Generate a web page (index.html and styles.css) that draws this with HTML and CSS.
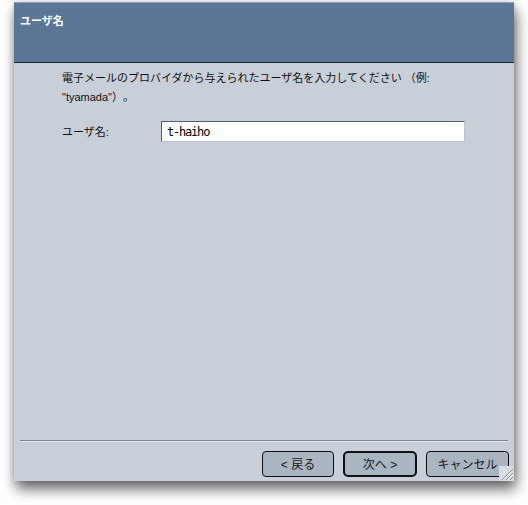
FILE: index.html
```html
<!DOCTYPE html>
<html lang="ja">
<head>
<meta charset="utf-8">
<title>ユーザ名</title>
<link rel="stylesheet" href="styles.css">
</head>
<body>
<div class="window">
  <div class="header">
    <div class="title">ユーザ名</div>
  </div>
  <div class="content">
    <p class="desc">電子メールのプロバイダから与えられたユーザ名を入力してください （例:<br>"tyamada"）。</p>
    <div class="field">
      <label class="label" for="user">ユーザ名:</label>
      <input class="input" id="user" type="text" value="t-haiho">
    </div>
  </div>
  <div class="separator"></div>
  <div class="footer">
    <button class="btn btn-back">&lt; 戻る</button>
    <button class="btn btn-next">次へ &gt;</button>
    <button class="btn btn-cancel">キャンセル</button>
  </div>
  <div class="grip">
    <svg width="15" height="15" viewBox="0 0 15 15">
      <line x1="3" y1="14" x2="14" y2="3" stroke="#8a8f96" stroke-width="1"/>
      <line x1="7" y1="14" x2="14" y2="7" stroke="#8a8f96" stroke-width="1"/>
      <line x1="11" y1="14" x2="14" y2="11" stroke="#8a8f96" stroke-width="1"/>
      <line x1="4" y1="14" x2="14" y2="4" stroke="#ffffff" stroke-width="1"/>
      <line x1="8" y1="14" x2="14" y2="8" stroke="#ffffff" stroke-width="1"/>
    </svg>
  </div>
</div>
</body>
</html>
```
FILE: styles.css
```css
html, body {
  margin: 0;
  padding: 0;
  background: #ffffff;
}
body {
  width: 528px;
  height: 505px;
  overflow: hidden;
  font-family: "Liberation Sans", "Noto Sans CJK JP", sans-serif;
  text-spacing-trim: space-all;
}
.window {
  position: relative;
  margin: 2px 0 0 14px;
  width: 500px;
  height: 479px;
  background: #c8cfd9;
  display: flex;
  flex-direction: column;
  box-shadow: 2px 8px 13px rgba(0, 0, 0, 0.6), 0 0 6px rgba(0, 0, 0, 0.15);
}
.header {
  height: 59px;
  background: #5b7696;
  border-top: 1px solid #8ea0b6;
  border-bottom: 1px solid #1c2533;
  box-sizing: content-box;
  flex: none;
}
.title {
  color: #ffffff;
  font-weight: bold;
  font-size: 11px;
  line-height: 13px;
  padding: 12px 0 0 6px;
}
.content {
  flex: 1;
  padding: 6px 0 0 48px;
}
.desc {
  margin: 0;
  font-size: 11px;
  line-height: 19px;
  color: #111111;
}
.field {
  display: flex;
  align-items: center;
  margin-top: 14px;
}
.label {
  width: 99px;
  font-size: 11px;
  color: #111111;
  align-self: flex-start;
  padding-top: 2px;
}
.input {
  width: 304px;
  height: 21px;
  box-sizing: border-box;
  margin: 0;
  border: 1px solid #555b63;
  border-right-color: #c0c4ca;
  border-bottom-color: #c0c4ca;
  background: #ffffff;
  padding: 0 5px;
  font-family: "DejaVu Sans Mono", monospace;
  font-size: 12px;
  letter-spacing: -1.2px;
  color: #000000;
  outline: none;
}
.separator {
  flex: none;
  height: 1px;
  margin: 0 6px 0 6px;
  background: #7d8694;
  border-bottom: 1px solid #e6eaef;
}
.footer {
  flex: none;
  height: 39px;
  display: flex;
  justify-content: flex-end;
  align-items: flex-start;
  gap: 9px;
  padding: 9px 5px 0 0;
  box-sizing: border-box;
}
.btn {
  height: 26px;
  box-sizing: border-box;
  margin: 0;
  background: #aab5c2;
  border: 1px solid #111111;
  border-radius: 4px;
  font-family: "Liberation Sans", "Noto Sans CJK JP", sans-serif;
  font-size: 12px;
  color: #1a1a1a;
  padding: 0 0 2px 0;
}
.btn-back {
  width: 72px;
}
.btn-next {
  width: 74px;
  border-width: 2px;
  border-radius: 5px;
}
.btn-cancel {
  width: 83px;
}
.grip {
  position: absolute;
  right: 0;
  bottom: 0;
  width: 15px;
  height: 15px;
  background: #d9dde3;
}
.grip svg {
  display: block;
}
```
